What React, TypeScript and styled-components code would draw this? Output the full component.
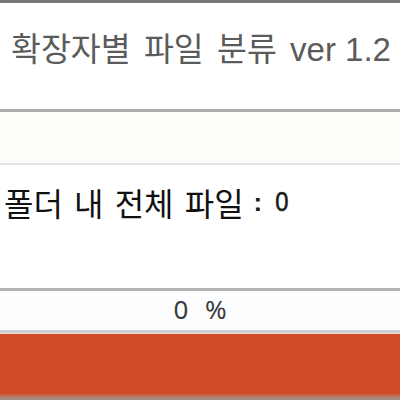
import React from "react";
import styled, { createGlobalStyle } from "styled-components";

const Global = createGlobalStyle`
  html, body { margin: 0; padding: 0; background: #ffffff; }
  body { width: 400px; height: 400px; overflow: hidden; }
`;

const Window = styled.div`
  width: 400px;
  height: 400px;
  display: flex;
  flex-direction: column;
  box-sizing: border-box;
  border-top: 3px solid #777777;
  background: #ffffff;
  font-family: "Noto Sans CJK KR", "Noto Sans", sans-serif;
`;

const TitleBar = styled.div`
  height: 109px;
  flex: none;
  display: flex;
  align-items: center;
  justify-content: center;
  padding-left: 2px;
  padding-bottom: 20px;
  box-sizing: border-box;
  border-bottom: 3px solid #ababab;
  background: #ffffff;
`;

const Title = styled.h1`
  margin: 0;
  font-size: 32.5px;
  font-weight: 400;
  color: #5b5b5b;
  word-spacing: 6px;
  white-space: nowrap;
`;

const Version = styled.span`
  font-family: "Liberation Sans", Arial, sans-serif;
  font-size: 33px;
  word-spacing: 0;
`;

const ToolStrip = styled.div`
  height: 51px;
  flex: none;
  background: #fefdf9;
  border-bottom: 2px solid #e6e6e6;
`;

const InfoPanel = styled.div`
  height: 126px;
  flex: none;
  display: flex;
  align-items: center;
  padding-left: 4px;
  padding-bottom: 49px;
  box-sizing: border-box;
  border-bottom: 3px solid #b3b3b3;
`;

const InfoLabel = styled.span`
  font-size: 32px;
  font-weight: 400;
  color: #111111;
  word-spacing: 4px;
  white-space: nowrap;
`;

const Colon = styled.span`
  font-family: "Liberation Sans", Arial, sans-serif;
  font-size: 26px;
  font-weight: 700;
  color: #1a1a1a;
  margin-left: 10px;
`;

const Count = styled.span`
  font-family: "Liberation Sans", Arial, sans-serif;
  font-size: 28px;
  font-weight: 400;
  color: #1a1a1a;
  margin-left: 12px;
  transform: scaleX(0.85);
  -webkit-text-stroke: 0.6px #1a1a1a;
`;

const PercentRow = styled.div`
  height: 39px;
  flex: none;
  display: flex;
  align-items: center;
  justify-content: center;
  padding-left: 0;
  padding-bottom: 3px;
  box-sizing: border-box;
  background: #fcfdff;
  font-family: "Noto Sans", "Liberation Sans", sans-serif;
  font-size: 26px;
  color: #3a3a3a;
  word-spacing: 10px;
`;

const ProgressTrack = styled.div`
  flex: 1;
  border-top: 3px solid #c9d0d8;
  box-shadow: inset 0 1px 0 #f2d4cc;
  background: linear-gradient(#d14b27, #d04a26 90%, #b57a66 95%, #9a9292 100%);
`;

export default function App() {
  return (
    <>
      <Global />
      <Window>
        <TitleBar>
          <Title>
            확장자별 파일 분류 <Version>ver 1.2</Version>
          </Title>
        </TitleBar>
        <ToolStrip />
        <InfoPanel>
          <InfoLabel>폴더 내 전체 파일</InfoLabel>
          <Colon>:</Colon>
          <Count>0</Count>
        </InfoPanel>
        <PercentRow>0 %</PercentRow>
        <ProgressTrack />
      </Window>
    </>
  );
}
